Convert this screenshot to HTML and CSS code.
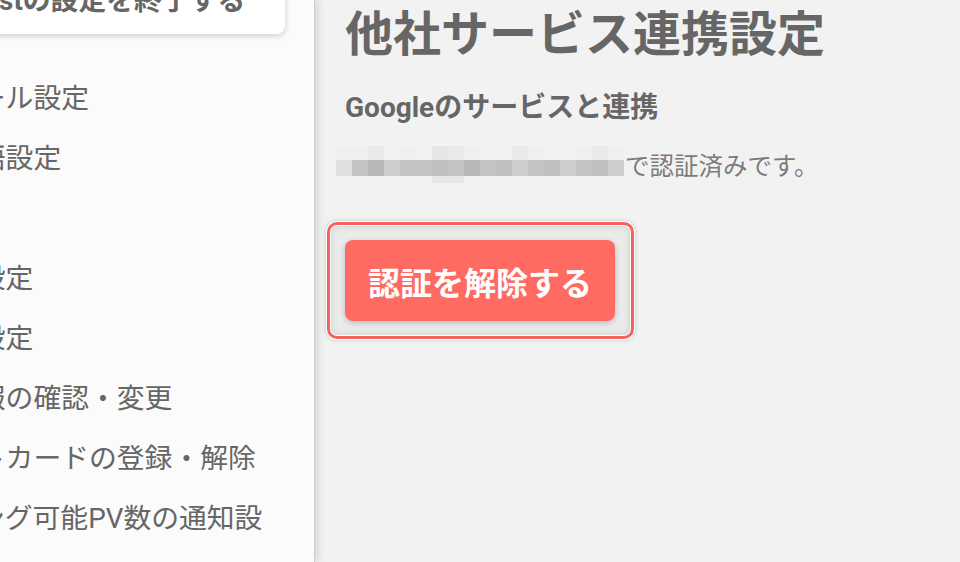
FILE: index.html
```html
<!DOCTYPE html>
<html lang="ja">
  <head>
    <meta charset="UTF-8" />
    <meta name="viewport" content="width=device-width, initial-scale=1.0" />
    <title>他社サービス連携設定</title>
    <link rel="stylesheet" href="styles.css">
  </head>
  <body>
    <div class="app">
      <aside class="sidebar">
        <div class="finish-card">Boostの設定を終了する</div>
        <ul class="menu">
          <li>メール設定</li>
          <li>言語設定</li>
          <li class="menu-gap"></li>
          <li>枠設定</li>
          <li>色設定</li>
          <li>情報の確認・変更</li>
          <li>ットカードの登録・解除</li>
          <li>キング可能PV数の通知設定</li>
        </ul>
      </aside>
      <main class="content">
        <h1>他社サービス連携設定</h1>
        <h2>Googleのサービスと連携</h2>
        <p class="auth-status">
          <span class="masked">
            <span class="g1"></span><span class="g1"></span><span class="g2"></span><span class="g0"></span><span class="g1"></span><span class="g0"></span><span class="g3"></span><span class="g2"></span><span class="g1"></span><span class="g0"></span><span class="g0"></span><span class="g2"></span><span class="g1"></span><span class="g0"></span><span class="g0"></span><span class="g1"></span><span class="g2"></span><span class="g1"></span>
            <span class="d1"></span><span class="d3"></span><span class="d5"></span><span class="d2"></span><span class="d3"></span><span class="d3"></span><span class="d4"></span><span class="d3"></span><span class="d5"></span><span class="d3"></span><span class="d4"></span><span class="d2"></span><span class="d3"></span><span class="d4"></span><span class="d2"></span><span class="d3"></span><span class="d4"></span><span class="d2"></span>
            <span class="g0"></span><span class="g0"></span><span class="g0"></span><span class="g0"></span><span class="g0"></span><span class="g0"></span><span class="g3"></span><span class="g3"></span><span class="g0"></span><span class="g0"></span><span class="g0"></span><span class="g0"></span><span class="g0"></span><span class="g0"></span><span class="g0"></span><span class="g0"></span><span class="g0"></span><span class="g0"></span>
          </span>
          <span>で認証済みです。</span>
        </p>
        <div class="focus-ring">
          <button type="button" class="btn-danger">認証を解除する</button>
        </div>
      </main>
    </div>
  </body>
</html>
```

FILE: styles.css
```css
html,
body {
  margin: 0;
  height: 100%;
}
body {
  font-family: Roboto, "Noto Sans CJK JP", sans-serif;
  color: #666;
  background-color: #f2f2f2;
}
.app {
  display: flex;
  height: 100vh;
  overflow: hidden;
}

/* sidebar */
.sidebar {
  position: relative;
  z-index: 1;
  box-sizing: border-box;
  width: 315px;
  flex-shrink: 0;
  padding-right: 29px;
  background-color: #fbfbfb;
  border-right: 1px solid #d0d0d0;
  box-shadow: 2px 0 9px rgba(0, 0, 0, 0.15);
  overflow: hidden;
}
.finish-card {
  margin: -33px 0 0 -70px;
  padding: 16px 20px 15px;
  font-size: 27.8px;
  font-weight: 700;
  line-height: 36px;
  white-space: nowrap;
  background-color: #fff;
  border-radius: 0 0 8px 0;
  box-shadow: 0 2px 6px rgba(0, 0, 0, 0.18);
}
.menu {
  list-style: none;
  margin: 35px 0 0 -50px;
  padding: 0;
}
.menu li {
  font-size: 27.8px;
  line-height: 60px;
  height: 60px;
}

/* main */
.content {
  flex: 1;
  padding: 7px 0 0 345px;
  margin-left: -315px;
}
.content h1 {
  margin: 0;
  font-size: 48px;
  font-weight: 700;
  line-height: 56px;
}
.content h2 {
  margin: 27px 0 0;
  font-size: 28px;
  font-weight: 700;
  line-height: 36px;
}
.auth-status {
  display: flex;
  align-items: center;
  margin: 20px 0 0;
  font-size: 24.5px;
  color: #7b7b7b;
}
.masked {
  display: grid;
  grid-template-columns: repeat(18, 16px);
  grid-template-rows: 14px 16px 7px;
  margin: 0 1px 0 -9px;
}
.g0 { background-color: transparent; }
.g1 { background-color: #efefef; }
.g2 { background-color: #eaeaea; }
.g3 { background-color: #e6e6e6; }
.d1 { background-color: #dfdfdf; }
.d2 { background-color: #cdcdcd; }
.d3 { background-color: #c4c3c2; }
.d4 { background-color: #bebfc0; }
.d5 { background-color: #b7b7b7; }

/* button with its focus ring */
.focus-ring {
  display: inline-block;
  margin: 39px 0 0 -18px;
  padding: 15px 16px 15px 15px;
  border: 3px solid #f2645d;
  border-radius: 10px;
  background-color: #ebebeb;
  box-shadow: 0 0 0 1px #fff, 0 0 4px 1px rgba(0, 0, 0, 0.18),
    inset 0 0 0 1px #fff, inset 0 0 6px 2px rgba(0, 0, 0, 0.1);
}
.btn-danger {
  display: block;
  height: 81px;
  padding: 0 23px;
  font-family: Roboto, "Noto Sans CJK JP", sans-serif;
  font-size: 32px;
  font-weight: 700;
  color: #fff;
  background-color: #ff6b63;
  border: none;
  border-radius: 8px;
  box-shadow: 0 2px 6px rgba(0, 0, 0, 0.2);
  cursor: pointer;
}
```
